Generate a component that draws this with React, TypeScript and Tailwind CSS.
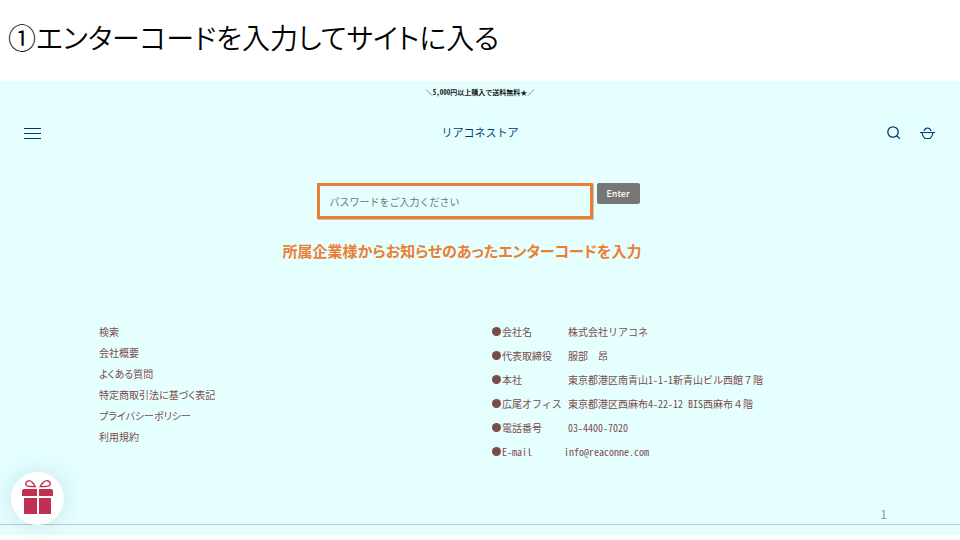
import * as React from "react";

const footerLinks = [
  "検索",
  "会社概要",
  "よくある質問",
  "特定商取引法に基づく表記",
  "プライバシーポリシー",
  "利用規約",
];

const companyInfo = [
  { label: "会社名", value: "株式会社リアコネ" },
  { label: "代表取締役", value: "服部　昂" },
  { label: "本社", value: "東京都港区南青山1-1-1新青山ビル西館７階" },
  { label: "広尾オフィス", value: "東京都港区西麻布4-22-12 BIS西麻布４階" },
  { label: "電話番号", value: "03-4400-7020" },
  { label: "E-mail", value: "info@reaconne.com" },
];

// Half-width forms for the ASCII runs only, full-width characters stay as they are
function MixedText({ text }: { text: string }) {
  return (
    <span>
      {text.split(/([\x20-\x7e]+)/).map((part, i) =>
        i % 2 === 1 ? (
          <span key={i} className="[font-feature-settings:'hwid']">
            {part}
          </span>
        ) : (
          part
        )
      )}
    </span>
  );
}

function MenuIcon() {
  return (
    <svg width="18" height="11" viewBox="0 0 18 11" fill="#003c71" aria-hidden="true">
      <path d="M0 0h17v1H0zM0 5h17v1H0zM0 10h17v1H0z" />
    </svg>
  );
}

function SearchIcon() {
  return (
    <svg width="14" height="14" viewBox="0 0 14 14" fill="none" stroke="#003c71" strokeWidth="1.3" aria-hidden="true">
      <circle cx="6" cy="6" r="5.2" />
      <path d="M9.6 9.7l3.4 3.2" />
    </svg>
  );
}

function BasketIcon() {
  return (
    <svg width="15" height="14" viewBox="0 0 15 14" fill="none" stroke="#003c71" strokeWidth="1.2" aria-hidden="true">
      <path d="M0 6.5h15M2 6.500c.3 2.600 1.200 4.600 3 6h5c1.800-1.400 2.700-3.400 3-6M4 5C4.600 3 5.800 2 7.500 2s2.900 1 3.500 3" />
    </svg>
  );
}

function GiftIcon() {
  return (
    <svg width="32" height="36" viewBox="0 0 32 36" fill="#c12f53" aria-hidden="true">
      <path d="M2 10h13v7H0v-5q0-2 2-2zM17 10h12q2 0 2 2v5H17zM2 19h13v16H2zM17 19h12v16H17z" />
      <path
        d="M13.200 7.600C11.500 4.500 9.300 1.300 6.700 1.700 4 2 3 5 4.500 6.500 5.500 7.600 8 7.600 13.200 7.600zM18.200 7.600C19.900 4.500 22.500 1.300 25.500 1.700c2.700.3 3.500 3.300 2 4.800C26.500 7.600 23.500 7.600 18.200 7.600z"
        fill="none"
        stroke="#c12f53"
        strokeWidth="1.4"
      />
    </svg>
  );
}

export default function App() {
  const [code, setCode] = React.useState("");

  return (
    <div className="flex min-h-screen flex-col bg-white pb-[5px] font-['Noto_Sans_CJK_JP',sans-serif]">
      <h1 className="px-2 pt-[13px] pb-5 text-[28px] leading-[48px] font-[350] text-black [font-feature-settings:'palt']">
        ①エンターコードを入力してサイトに入る
      </h1>

      <div className="relative flex grow flex-col bg-[#e5ffff]">
        <p className="pt-1 text-center text-[7px] leading-[14px] font-bold text-[#1b1b1b]">
          <MixedText text="＼5,000円以上購入で送料無料★／" />
        </p>

        <header className="grid grid-cols-3 items-center px-6 pt-[23px]">
          <button type="button" aria-label="メニュー" className="mt-[2px] justify-self-start">
            <MenuIcon />
          </button>
          <a href="#" className="justify-self-center text-[11px] leading-5 text-[#003c71]">
            リアコネストア
          </a>
          <div className="mt-[2px] flex items-center gap-[19px] justify-self-end pr-px">
            <button type="button" aria-label="検索">
              <SearchIcon />
            </button>
            <button type="button" aria-label="カート">
              <BasketIcon />
            </button>
          </div>
        </header>

        <main className="flex flex-col items-center pt-[41px]">
          <form className="mr-1 flex items-start gap-1" onSubmit={(e) => e.preventDefault()}>
            <input
              type="password"
              aria-label="エンターコード"
              placeholder="パスワードをご入力ください"
              value={code}
              onChange={(e) => setCode(e.target.value)}
              className="h-9 w-[276px] border-3 border-[#ed7d31] px-[10px] text-[10px] text-gray-700 shadow-[1px_1px_0_#b9c6c6] outline-none placeholder:text-[#697777]"
            />
            <button
              type="submit"
              className="h-[21px] w-[43px] rounded-xs bg-[#777777] text-[9px] font-medium text-white"
            >
              Enter
            </button>
          </form>
          <p className="mt-5 mr-9 text-[15px] leading-6 font-bold text-[#ed7d31] [font-feature-settings:'palt']">
            所属企業様からお知らせのあったエンターコードを入力
          </p>
        </main>

        <footer className="grid grid-cols-2 gap-6 px-[99px] pt-[58px] text-[10px] text-[#7b4b4b]">
          <ul className="[font-feature-settings:'palt']">
            {footerLinks.map((link) => (
              <li key={link} className="leading-[21px]">
                <a href="#">{link}</a>
              </li>
            ))}
          </ul>
          <dl>
            {companyInfo.map((item) => (
              <div key={item.label} className="flex h-6 leading-[21px] whitespace-nowrap last:[&>dt]:w-[72px]">
                <dt className="flex w-[76px] items-start">
                  <span className="mt-[6px] mr-px size-[9px] shrink-0 rounded-full bg-[#7b4b4b]" />
                  <MixedText text={item.label} />
                </dt>
                <dd>
                  <MixedText text={item.value} />
                </dd>
              </div>
            ))}
          </dl>
        </footer>

        <div className="mt-auto mb-[10px] flex justify-end border-b border-[#bfc9c9] pr-[73px] text-[12px] leading-5 text-[#8b9797]">
          1
        </div>

        <button
          type="button"
          aria-label="ギフト"
          className="absolute bottom-[10px] left-[11px] flex size-[53px] items-center justify-center rounded-full bg-white pb-[3px] shadow-[0_0_24px_rgba(0,60,60,0.14)]"
        >
          <GiftIcon />
        </button>
      </div>
    </div>
  );
}
